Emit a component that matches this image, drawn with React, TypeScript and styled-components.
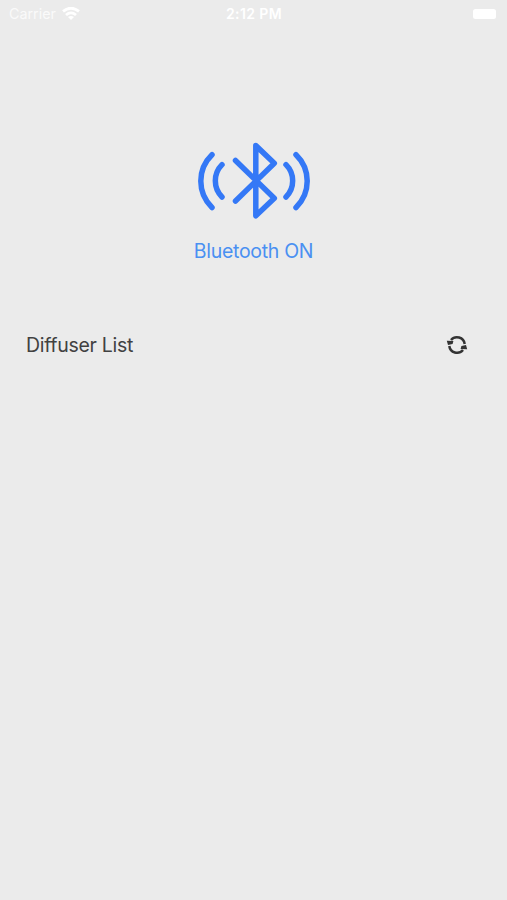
import React from "react";
import styled, { createGlobalStyle } from "styled-components";

const GlobalStyle = createGlobalStyle`
  * { box-sizing: border-box; }
  body { margin: 0; background: #ebebeb; }
`;

const Screen = styled.main`
  display: flex;
  flex-direction: column;
  width: 100%;
  min-height: 900px;
  background: #ebebeb;
  font-family: Inter, "Liberation Sans", sans-serif;
`;

const StatusBar = styled.header`
  display: grid;
  grid-template-columns: 1fr auto 1fr;
  align-items: center;
  height: 28px;
  padding: 0 11px 0 12px;
  color: #fff;
  font-size: 14.3px;
`;

const Carrier = styled.div`
  display: flex;
  align-items: center;
  gap: 6px;
  margin-left: -3px;
  line-height: 28px;
  color: #fafafa;
`;

const Time = styled.time`
  padding-bottom: 2px;
  font-size: 14px;
  font-weight: 600;
  letter-spacing: 0.4px;
`;

const Battery = styled.span`
  justify-self: end;
  width: 23px;
  height: 10px;
  margin-top: -1px;
  border-radius: 2.5px;
  background: #fff;
`;

const BluetoothPanel = styled.section`
  display: flex;
  flex-direction: column;
  align-items: center;
  padding-top: 112px;
  color: #3478f6;
  svg { display: block; }
`;

const BluetoothLabel = styled.p`
  margin: 19px 0 0;
  font-size: 19.5px;
  line-height: 24px;
  letter-spacing: -0.3px;
  color: #4a90f2;
`;

const ListHeader = styled.section`
  display: flex;
  align-items: center;
  justify-content: space-between;
  margin-top: 65px;
  height: 34px;
  padding: 0 38px 0 26px;
  color: #414141;
`;

const ListTitle = styled.h1`
  margin: 0;
  font-size: 19.5px;
  font-weight: 400;
  line-height: 24px;
  letter-spacing: -0.3px;
`;

const RefreshButton = styled.button`
  display: flex;
  padding: 0;
  border: 0;
  background: none;
  color: #333;
`;

const WifiIcon = () => (
  <svg width="18" height="14" viewBox="0 0 18 14" fill="none" stroke="#fff" strokeWidth="2.8">
    <path d="M1 4.4Q9-2 17 4.4M4 8Q9 3.8 14 8" />
    <path d="M9 13 6 10.1Q9 7.8 12 10.1Z" fill="#fff" stroke="none" />
  </svg>
);

const BluetoothIcon = () => (
  <svg width="116" height="80" viewBox="196 140 116 80" fill="none" stroke="currentColor" strokeWidth="5.5" strokeLinecap="round" strokeLinejoin="round">
    <path d="M235.5 160.5 274.3 198.3 255.8 215.8V145.6L274.3 163.2 235.5 201" />
    <path d="M212 154.7A36.7 36.7 0 0 0 212 207.5M222 164.6A23 23 0 0 0 222 197" />
    <path d="M286 164.6A23 23 0 0 1 286 197M296 154.7A36.7 36.7 0 0 1 296 207.5" />
  </svg>
);

const RefreshIcon = () => (
  <svg width="24" height="24" viewBox="0 0 24 24" fill="none" stroke="currentColor" strokeWidth="2.5">
    <path d="M6 7A7.8 7.8 0 0 1 19.7 11M18 17A7.8 7.8 0 0 1 4.3 13" />
    <path d="M1.8 7.8 8.4 8 7.6 11 3 12ZM22.2 16.2 15.6 16 16.4 13 21 12Z" fill="currentColor" stroke="none" />
  </svg>
);

export default function App() {
  return (
    <>
      <GlobalStyle />
      <Screen>
        <StatusBar>
          <Carrier>Carrier <WifiIcon /></Carrier>
          <Time>2:12 PM</Time>
          <Battery />
        </StatusBar>
        <BluetoothPanel>
          <BluetoothIcon />
          <BluetoothLabel>Bluetooth ON</BluetoothLabel>
        </BluetoothPanel>
        <ListHeader>
          <ListTitle>Diffuser List</ListTitle>
          <RefreshButton aria-label="Refresh"><RefreshIcon /></RefreshButton>
        </ListHeader>
      </Screen>
    </>
  );
}
